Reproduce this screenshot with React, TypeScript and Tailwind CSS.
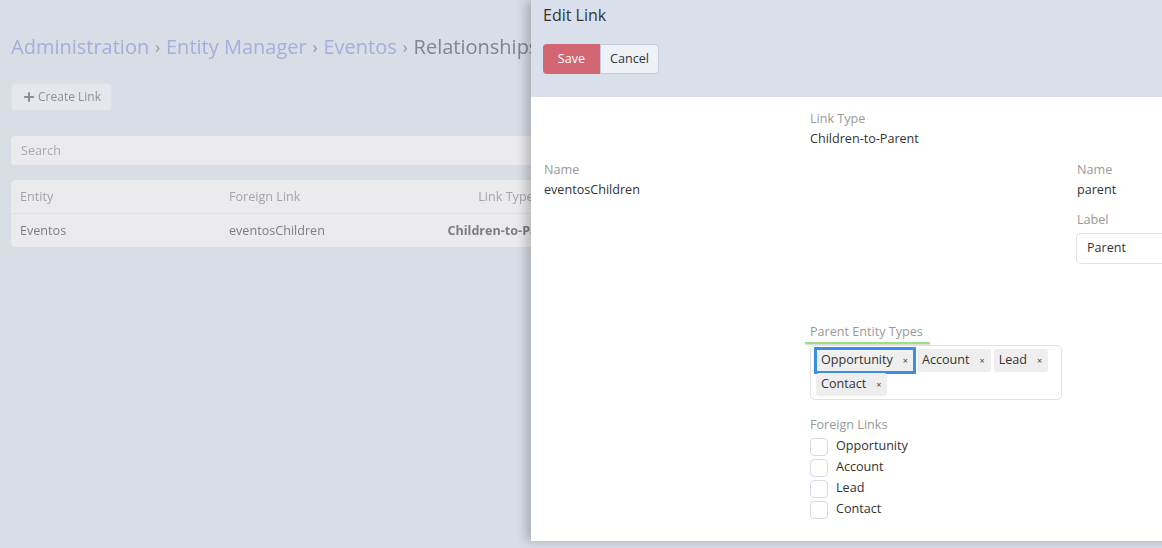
import { Plus } from "lucide-react";

const font = { fontFamily: '"Open Sans", "Liberation Sans", sans-serif' };

// blurred page behind the modal
function BackgroundPage() {
  return (
    <div className="w-full h-full bg-[#d9dde6] px-[11px] pt-[34px] blur-[0.7px]">
      <div className="text-[20px] leading-[26px] flex items-center gap-[6px] whitespace-nowrap">
        <span className="text-[#a2b0da]">Administration</span>
        <span className="text-[#8f939c] text-[16px]">›</span>
        <span className="text-[#a2b0da]">Entity Manager</span>
        <span className="text-[#8f939c] text-[16px]">›</span>
        <span className="text-[#a2b0da]">Eventos</span>
        <span className="text-[#8f939c] text-[16px]">›</span>
        <span className="text-[#808590]">Relationships</span>
      </div>

      <div className="mt-[23px]">
        <button className="h-[28px] w-[101px] rounded-[4px] bg-[#e5e7ed] border border-[#dde0e8] flex items-center justify-center gap-[2px] text-[12px] text-[#8e9198]">
          <Plus size={14} strokeWidth={3.5} className="text-[#8a8d94]" />
          Create Link
        </button>
      </div>

      <div className="mt-[25px] h-[29px] w-[1130px] rounded-[4px] bg-[#ebebee] flex items-center px-[10px] pt-[1px] text-[12.6px] text-[#a8a9ae]">
        Search
      </div>

      <div className="mt-[15px] w-[1130px] rounded-[5px] bg-[#ebebed] text-[12.6px]">
        <div className="h-[34px] grid grid-cols-[209px_213px_128px_1fr] items-center px-[9px] pt-[1px] border-b border-[#e0e0e3] text-[#a4a5aa]">
          <span>Entity</span>
          <span>Foreign Link</span>
          <span className="text-center">Link Type</span>
          <span />
        </div>
        <div className="h-[33px] grid grid-cols-[209px_213px_128px_1fr] items-center px-[9px] pt-[1px] text-[#7c7e84]">
          <span>Eventos</span>
          <span>eventosChildren</span>
          <span className="text-center font-bold whitespace-nowrap">Children-to-Parent</span>
          <span />
        </div>
      </div>
    </div>
  );
}

function Field({ label, value }: { label: string; value: string }) {
  return (
    <div>
      <div className="h-[20px] leading-[20px] text-[#999]">{label}</div>
      <div className="h-[20px] leading-[20px] text-[#333]">{value}</div>
    </div>
  );
}

function Tag({ text, focused }: { text: string; focused?: boolean }) {
  return (
    <div
      className={`h-[23px] flex items-center rounded-[3px] bg-[#eeeeee] pl-[5px] pr-[6px] gap-[10px] ${
        focused ? "outline-[3px] outline outline-[#3a8ee6] outline-offset-[-1px] rounded-none bg-[#efefef]" : ""
      }`}
    >
      <span className="text-[#333] leading-none">{text}</span>
      <span className="text-[9px] text-[#444] leading-none">×</span>
    </div>
  );
}

function Checkbox({ label }: { label: string }) {
  return (
    <div className="h-[21px] flex items-center gap-[8px]">
      <div className="w-[18px] h-[18px] rounded-[4px] border border-[#d6dae8] bg-white" />
      <span className="text-[#333]">{label}</span>
    </div>
  );
}

function EditLinkModal() {
  return (
    <div className="absolute left-[531px] top-0 w-[660px] shadow-[-5px_0_10px_rgba(0,0,0,0.22)]" style={font}>
      {/* header */}
      <div className="h-[97px] bg-[#dae0eb] px-[12px] pt-[4px]">
        <div className="text-[16px] leading-[22px] text-[#333]">Edit Link</div>
        <div className="mt-[18px] flex text-[12.6px]">
          <button className="h-[30px] w-[57px] bg-[#d26673] text-white rounded-l-[4px]">Save</button>
          <button className="h-[30px] w-[59px] bg-[#eef1f6] text-[#333] border border-[#c4cadf] rounded-r-[4px]">
            Cancel
          </button>
        </div>
      </div>

      {/* body */}
      <div className="h-[444px] bg-white px-[13px] pt-[12px] text-[12.6px]">
        <div className="grid grid-cols-[266px_267px_1fr]">
          <div />
          <Field label="Link Type" value="Children-to-Parent" />
          <div />
        </div>

        <div className="grid grid-cols-[266px_267px_1fr] mt-[11px]">
          <Field label="Name" value="eventosChildren" />
          <div />
          <div>
            <Field label="Name" value="parent" />
            <div className="mt-[10px] h-[20px] leading-[20px] text-[#999]">Label</div>
            <div className="mt-[3px] -ml-[1px] h-[31px] w-[120px] rounded-l-[5px] border border-r-0 border-[#dde1ec] flex items-center px-[10px] text-[#333]">
              Parent
            </div>
          </div>
        </div>

        <div className="grid grid-cols-[266px_267px_1fr] mt-[58px]">
          <div />
          <div>
            <div className="h-[20px] leading-[20px] text-[#999]">Parent Entity Types</div>
            <div className="-ml-[5px] w-[125px] h-[2px] bg-[#9de27f] shadow-[0_1px_1px_rgba(0,0,0,0.15)]" />
            <div className="mt-[1px] w-[252px] h-[55px] rounded-[5px] border border-[#dde1ec] pl-[5px] pr-[2px] pt-[3px] flex flex-wrap content-start gap-x-[3px] gap-y-[1px]">
              <Tag text="Opportunity" focused />
              <Tag text="Account" />
              <Tag text="Lead" />
              <Tag text="Contact" />
            </div>

            <div className="mt-[15px] h-[20px] leading-[20px] text-[#999]">Foreign Links</div>
            <div className="mt-[1px] flex flex-col">
              <Checkbox label="Opportunity" />
              <Checkbox label="Account" />
              <Checkbox label="Lead" />
              <Checkbox label="Contact" />
            </div>
          </div>
          <div />
        </div>
      </div>
    </div>
  );
}

export default function App() {
  return (
    <div className="relative w-[1162px] h-[548px] overflow-hidden" style={font}>
      <BackgroundPage />
      <EditLinkModal />
    </div>
  );
}
